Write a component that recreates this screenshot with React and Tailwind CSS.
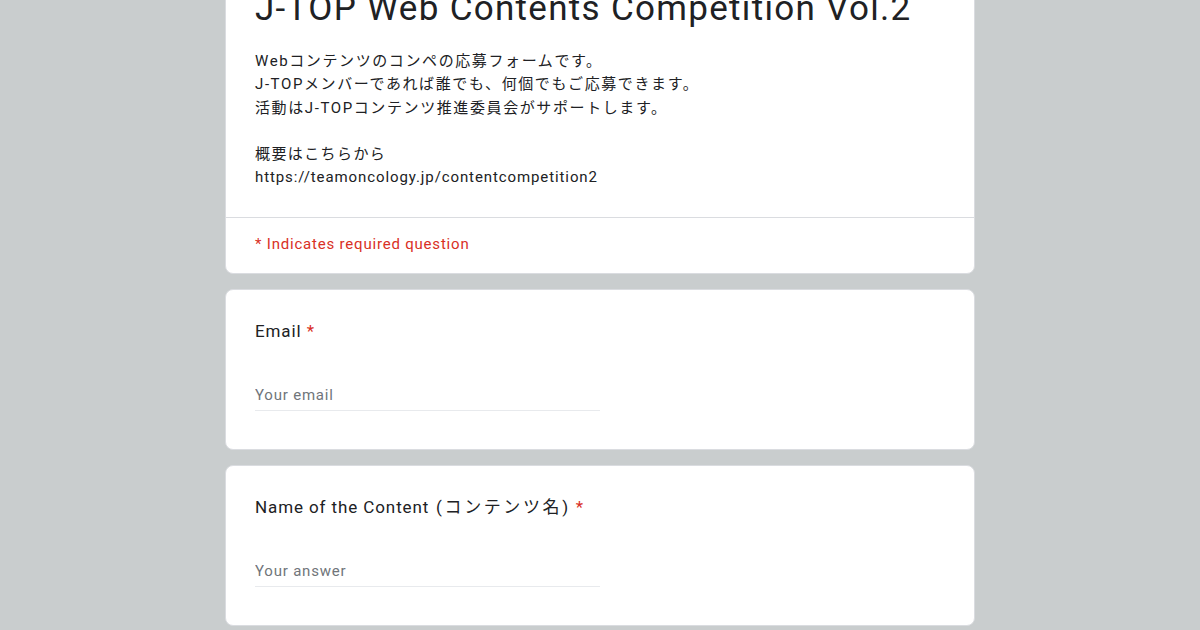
import React from 'react';

const font = { fontFamily: 'Roboto, "Noto Sans CJK JP", sans-serif' };

function Question({ label, extra, placeholder }) {
  return (
    <div className="bg-white rounded-lg border border-[#dadce0] px-[29px] pt-[29px] pb-[38px]">
      <div className="text-[17px] leading-[24px] text-[#202124] tracking-[0.9px]">
        {label}
        {extra && <span className="tracking-[2.6px]"> {extra}</span>}{' '}
        <span className="text-[#d93025]">*</span>
      </div>
      <div className="mt-[40px] w-[345px] border-b border-[#e8eaed] pb-[3px]">
        <input
          className="w-full text-[15px] leading-[24px] tracking-[0.8px] text-[#202124] placeholder-[#70757a] outline-none bg-transparent"
          placeholder={placeholder}
        />
      </div>
    </div>
  );
}

export default function App() {
  return (
    <div className="min-h-screen bg-[#c9cdce] overflow-hidden" style={font}>
      <div className="w-[750px] mx-auto flex flex-col gap-[15px]">
        <div className="bg-white rounded-lg border border-[#dadce0] mt-[-24px]">
          <div className="px-[29px] pt-[10px] pb-[27px] border-b border-[#dadce0]">
            <h1 className="text-[35px] leading-[44px] text-[#202124] tracking-[1.3px] whitespace-nowrap">
              J-TOP Web Contents Competition Vol.2
            </h1>
            <div className="mt-[19px] text-[15px] leading-[23.3px] tracking-[0.9px] text-[#202124]">
              <p className="tracking-[1.6px]">Webコンテンツのコンペの応募フォームです。</p>
              <p className="tracking-[1.6px]">J-TOPメンバーであれば誰でも、何個でもご応募できます。</p>
              <p className="tracking-[1.6px]">活動はJ-TOPコンテンツ推進委員会がサポートします。</p>
              <p className="h-[23.3px]"></p>
              <p className="tracking-[1.4px]">概要はこちらから</p>
              <p>https://teamoncology.jp/contentcompetition2</p>
            </div>
          </div>
          <div className="px-[29px] pt-[14px] pb-[17px] text-[15px] leading-[24px] tracking-[0.8px] text-[#d93025]">
            * Indicates required question
          </div>
        </div>
        <Question label="Email" placeholder="Your email" />
        <Question label="Name of the Content" extra="(コンテンツ名)" placeholder="Your answer" />
      </div>
    </div>
  );
}
